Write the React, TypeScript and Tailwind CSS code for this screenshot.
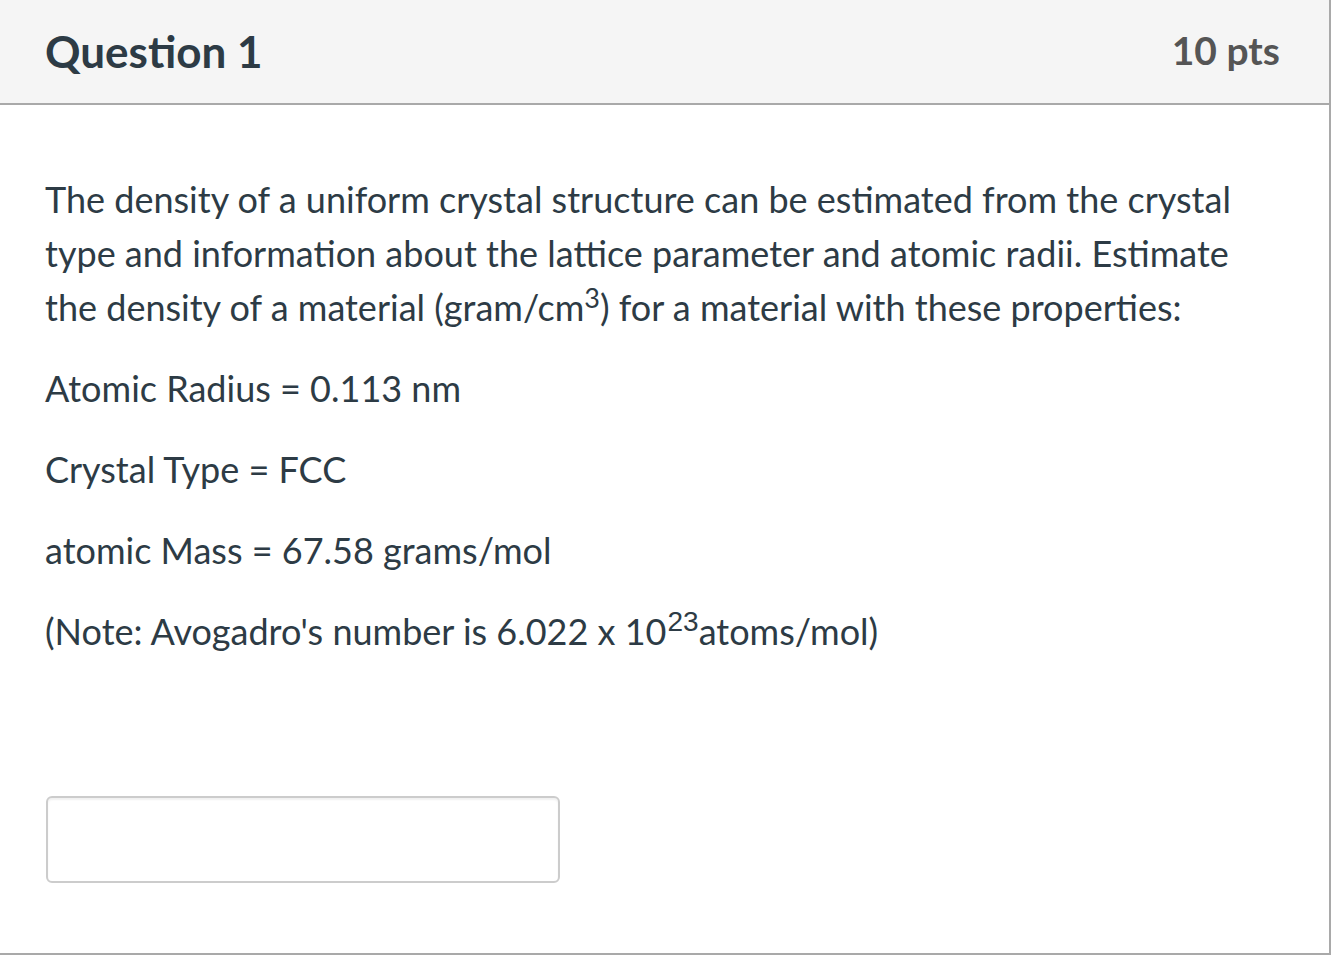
export default function App() {
  return (
    <div className="w-[1331px] h-[956px] bg-white font-['Lato',sans-serif] text-[#2d3b45]">
      <div className="w-[1331px] h-[955px] border-r-2 border-b-2 border-[#a9a9a9] flex flex-col">
        <div className="h-[105px] shrink-0 bg-[#f5f5f5] border-b-2 border-[#a9a9a9] flex items-center justify-between pl-[45px] pr-[49px]">
          <div className="text-[44px] font-bold leading-none pb-[2px]">Question 1</div>
          <div className="text-[39px] font-bold leading-none text-[#555555] pb-[2px]">10 pts</div>
        </div>
        <div className="pl-[45px] pr-[46px] pt-[67px] text-[36px] leading-[54px]">
          <p className="mb-[27px] pr-[40px]">
            The density of a uniform crystal structure can be estimated from the crystal type and information about the
            lattice parameter and atomic radii. Estimate the density of a material (gram/cm<sup>3</sup>) for a material
            with these properties:
          </p>
          <p className="mb-[27px]">Atomic Radius = 0.113 nm</p>
          <p className="mb-[27px]">Crystal Type = FCC</p>
          <p className="mb-[27px]">atomic Mass = 67.58 grams/mol</p>
          <p>
            (Note: Avogadro's number is 6.022 x 10
            <sup className="font-['Liberation_Sans',sans-serif] text-[28px] pl-[1px]">23</sup>atoms/mol)
          </p>
          <div className="mt-[138px] ml-[1px] w-[514px] h-[87px] border-2 border-[#cccccc] rounded-[6px] bg-white shadow-[inset_0_2px_2px_rgba(0,0,0,0.06)]" />
        </div>
      </div>
    </div>
  )
}
